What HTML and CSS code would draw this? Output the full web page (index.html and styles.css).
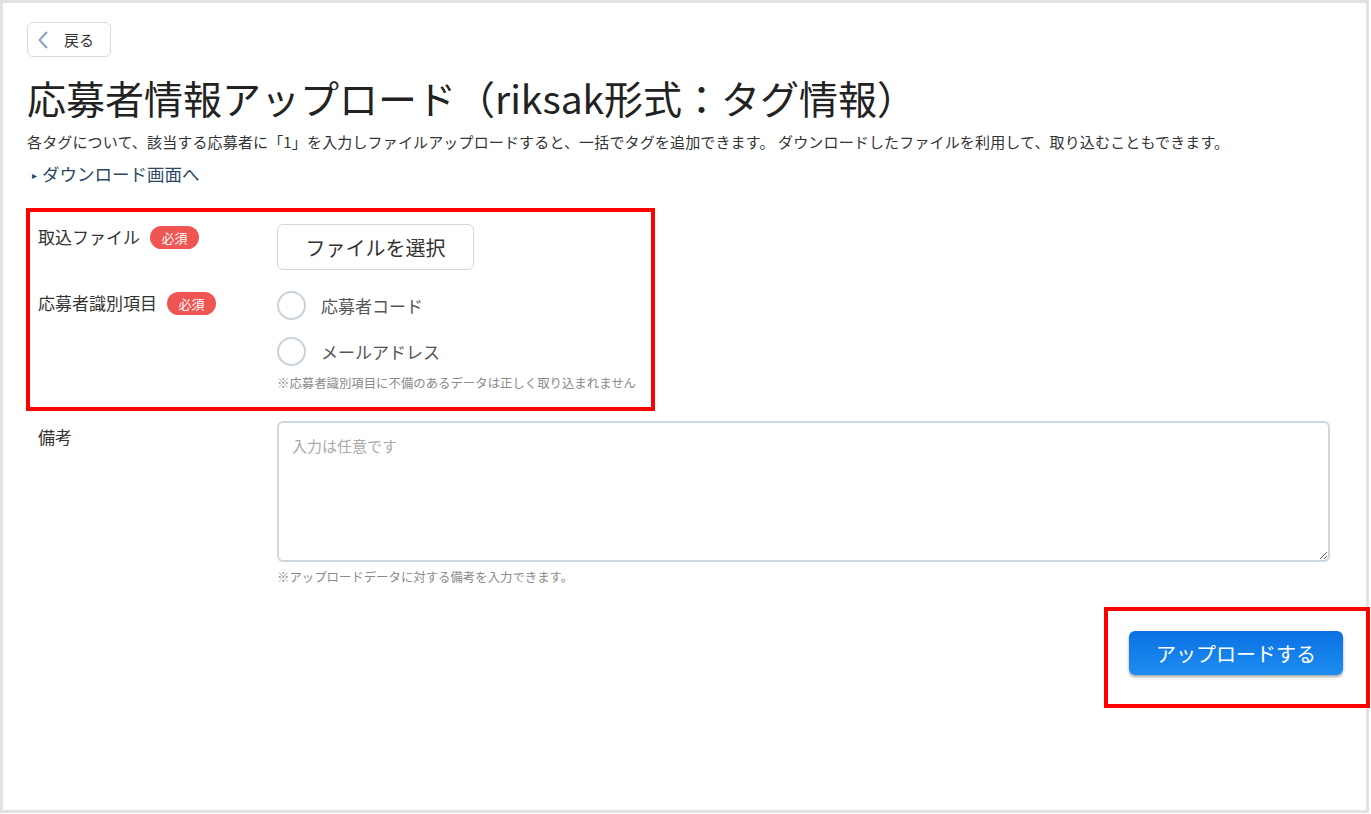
FILE: index.html
```html
<!DOCTYPE html>
<html lang="ja">
<head>
  <meta charset="UTF-8" />
  <title>応募者情報アップロード</title>
  <link rel="stylesheet" href="styles.css">
</head>
<body>
  <div class="page">
    <button class="back-btn">
      <svg width="10" height="18" viewBox="0 0 10 18"><path d="M9 1 L1.5 9 L9 17" fill="none" stroke="#8fa4b8" stroke-width="2"/></svg>
      <span>戻る</span>
    </button>
    <h1 class="title">応募者情報アップロード（riksak形式：タグ情報）</h1>
    <p class="desc">各タグについて、該当する応募者に「1」を入力しファイルアップロードすると、一括でタグを追加できます。 ダウンロードしたファイルを利用して、取り込むこともできます。</p>
    <a class="dl-link" href="#"><span class="tri">&#9656;</span>ダウンロード画面へ</a>

    <div class="mark mark-form">
      <div class="row">
        <div class="label">取込ファイル <span class="badge">必須</span></div>
        <div class="value">
          <button class="file-btn">ファイルを選択</button>
        </div>
      </div>
      <div class="row row-radio">
        <div class="label">応募者識別項目 <span class="badge">必須</span></div>
        <div class="value">
          <label class="radio"><span class="circle"></span>応募者コード</label>
          <label class="radio"><span class="circle"></span>メールアドレス</label>
          <p class="note">※応募者識別項目に不備のあるデータは正しく取り込まれません</p>
        </div>
      </div>
    </div>

    <div class="row row-memo">
      <div class="label">備考</div>
      <div class="value value-wide">
        <textarea class="memo" placeholder="入力は任意です"></textarea>
        <p class="note note-memo">※アップロードデータに対する備考を入力できます。</p>
      </div>
    </div>

    <div class="actions">
      <div class="mark mark-submit">
        <button class="submit-btn">アップロードする</button>
      </div>
    </div>
  </div>
</body>
</html>
```

FILE: styles.css
```css
body {
  margin: 0;
  background: #fff;
  font-family: "Noto Sans CJK JP", "Noto Sans", sans-serif;
  color: #333;
}
.page {
  width: 1369px;
  height: 813px;
  box-sizing: border-box;
  border: 3px solid #e2e2e2;
  padding: 19px 36px 0 24px;
}
.back-btn {
  display: flex;
  align-items: center;
  gap: 16px;
  width: 84px;
  height: 35px;
  padding: 0 0 0 10px;
  border: 1px solid #d6dadf;
  border-radius: 6px;
  background: #fff;
  font-family: inherit;
  font-size: 15px;
  color: #333;
}
.title {
  margin: 16px 0 0;
  font-size: 39px;
  font-weight: normal;
  line-height: 48px;
  color: #222;
  white-space: nowrap;
}
.desc {
  margin: 10px 0 0;
  font-size: 15px;
  line-height: 22px;
  letter-spacing: 0.15px;
  white-space: nowrap;
}
.dl-link {
  display: inline-block;
  margin: 10px 0 0 5px;
  font-size: 17.5px;
  line-height: 22px;
  color: #2a4866;
  text-decoration: none;
}
.tri {
  font-size: 10px;
  margin-right: 5px;
  vertical-align: 2px;
}
.mark {
  border: 4px solid #ff0000;
  box-sizing: border-box;
}
.mark-form {
  width: 629px;
  margin: 22px 0 0 -1px;
  padding: 12px 0 15px 8px;
}
.row {
  display: flex;
  align-items: flex-start;
}
.label {
  width: 239px;
  flex: none;
  display: flex;
  align-items: center;
  gap: 10px;
  font-size: 17px;
  line-height: 24px;
  padding-top: 1px;
}
.badge {
  display: inline-block;
  width: 49px;
  height: 23px;
  line-height: 23px;
  border-radius: 12px;
  background: #ef5552;
  color: #fff;
  font-size: 13px;
  text-align: center;
}
.file-btn {
  width: 197px;
  height: 46px;
  border: 1px solid #d4d7da;
  border-radius: 6px;
  background: #fff;
  font-family: inherit;
  font-size: 20px;
  color: #333;
}
.row-radio {
  margin-top: 21px;
}
.row-radio .label {
  padding-top: 0;
}
.radio {
  display: flex;
  align-items: center;
  gap: 15px;
  height: 29px;
  font-size: 17px;
  color: #555;
}
.radio + .radio {
  margin-top: 17px;
}
.circle {
  width: 25px;
  height: 25px;
  border: 2px solid #c9d3dc;
  border-radius: 50%;
}
.note {
  margin: 9px 0 0;
  font-size: 12.4px;
  line-height: 17px;
  color: #8a8a8a;
  white-space: nowrap;
}
.row-memo {
  margin-top: 10px;
  padding-left: 11px;
}
.row-memo .label {
  padding-top: 4px;
}
.value-wide {
  flex: 1;
}
.memo {
  display: block;
  width: 100%;
  height: 141px;
  box-sizing: border-box;
  border: 2px solid #cdd7e0;
  border-radius: 6px;
  padding: 12px 13px;
  font-family: inherit;
  font-size: 15px;
  resize: vertical;
}
.memo::placeholder {
  color: #aaa;
}
.note-memo {
  margin-top: 7px;
}
.actions {
  display: flex;
  justify-content: flex-end;
  margin: 21px -40px 0 0;
}
.mark-submit {
  width: 266px;
  height: 101px;
  padding: 20px 0 0 21px;
}
.submit-btn {
  width: 214px;
  height: 44px;
  border: none;
  border-radius: 6px;
  background: linear-gradient(#0a70e3, #1d8ef0);
  box-shadow: 0 2px 3px rgba(0, 0, 0, 0.35);
  color: #fff;
  font-family: inherit;
  font-size: 20px;
}
```
